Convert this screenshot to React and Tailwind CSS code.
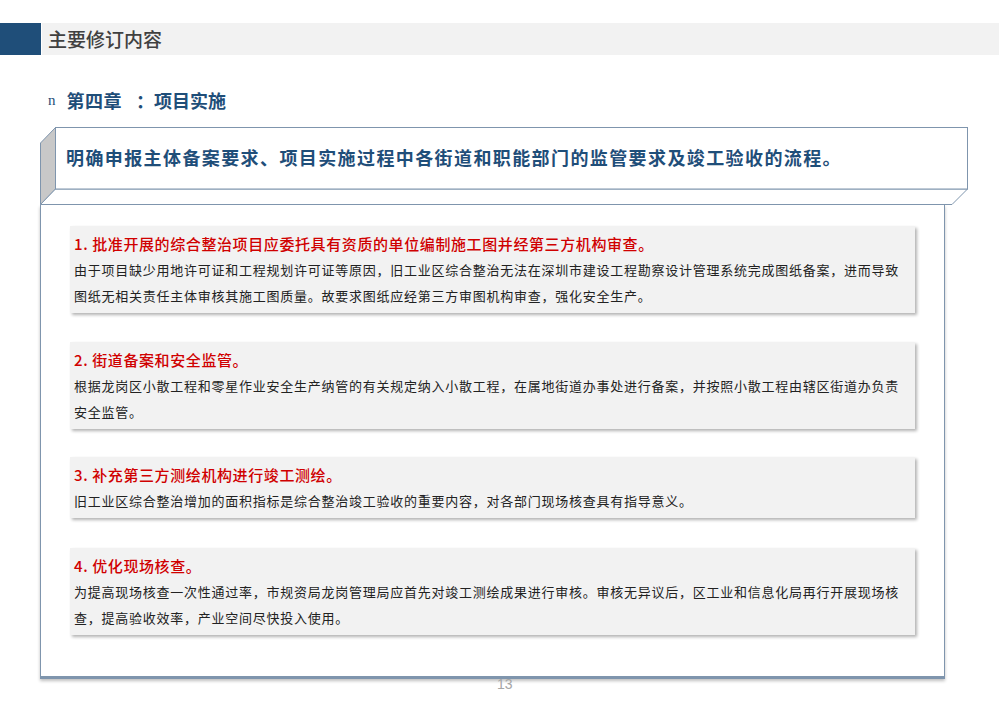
import React from 'react'

const font = { fontFamily: '"Noto Sans CJK SC", "Liberation Sans", sans-serif' }

const items = [
  {
    title: '1. 批准开展的综合整治项目应委托具有资质的单位编制施工图并经第三方机构审查。',
    body: '由于项目缺少用地许可证和工程规划许可证等原因，旧工业区综合整治无法在深圳市建设工程勘察设计管理系统完成图纸备案，进而导致图纸无相关责任主体审核其施工图质量。故要求图纸应经第三方审图机构审查，强化安全生产。',
    mt: 'mt-[20px]',
  },
  {
    title: '2. 街道备案和安全监管。',
    body: '根据龙岗区小散工程和零星作业安全生产纳管的有关规定纳入小散工程，在属地街道办事处进行备案，并按照小散工程由辖区街道办负责安全监管。',
    mt: 'mt-[29px]',
  },
  {
    title: '3. 补充第三方测绘机构进行竣工测绘。',
    body: '旧工业区综合整治增加的面积指标是综合整治竣工验收的重要内容，对各部门现场核查具有指导意义。',
    mt: 'mt-[28px]',
  },
  {
    title: '4. 优化现场核查。',
    body: '为提高现场核查一次性通过率，市规资局龙岗管理局应首先对竣工测绘成果进行审核。审核无异议后，区工业和信息化局再行开展现场核查，提高验收效率，产业空间尽快投入使用。',
    mt: 'mt-[30px]',
  },
]

export default function App() {
  return (
    <div className="w-[999px] h-[706px] bg-white overflow-hidden relative" style={font}>
      <div className="flex h-[32px] mt-[23px]">
        <div className="w-[41px] bg-[#1f4e79]" />
        <div className="flex-1 ml-[1px] bg-[#f2f2f2] flex items-center pl-[6px] text-[19px] text-[#404040] font-medium">
          主要修订内容
        </div>
      </div>

      <div className="flex items-center mt-[32px] ml-[48px] h-[26px]">
        <span className="text-[15px] text-[#1f4e79] mr-[11px]" style={{ fontFamily: '"Liberation Serif", serif' }}>n</span>
        <span className="text-[18px] font-bold text-[#1f4e79] tracking-[0.5px]">第四章</span>
        <span className="text-[18px] font-bold text-[#1f4e79] ml-[14px]">：项目实施</span>
      </div>

      <div className="relative ml-[40px] mt-[14px] w-[929px] h-[78px]">
        <svg className="absolute inset-0" width="929" height="78" viewBox="0 0 929 78">
          <polygon points="0.5,16 15.5,0.5 15.5,62 0.5,77.5" fill="#c8c8c8" stroke="#7f95ad" />
          <polygon points="0.5,77.5 15.5,62 927.5,62 912,77.5" fill="#fff" stroke="#7f95ad" />
          <rect x="15.5" y="0.5" width="912" height="61.5" fill="#fff" stroke="#7f95ad" />
        </svg>
        <div className="relative pl-[26px] pt-[17px] text-[18px] font-bold text-[#1f4e79] tracking-[1.4px]">
          明确申报主体备案要求、项目实施过程中各街道和职能部门的监管要求及竣工验收的流程。
        </div>
      </div>

      <div className="ml-[40px] w-[905px] h-[474px] border-x border-b-[3px] border-[#7f95ad] shadow-[0_2px_3px_rgba(0,0,0,0.25)] px-[29px] pt-[1px]">
        {items.map((it, i) => (
          <div key={i} className={`${it.mt} bg-[#f2f2f2] shadow-[2px_2px_3px_rgba(0,0,0,0.3)] px-[4px] pt-[5px] pb-[4px]`}>
            <div className="text-[15px] font-medium text-[#d00000] leading-[26px] tracking-[0.6px]">{it.title}</div>
            <div className="text-[13px] text-[#222] leading-[26px] tracking-[0.75px]">{it.body}</div>
          </div>
        ))}
      </div>

      <div className="absolute left-[497px] top-[674px] text-[14px] text-[#a6a6a6]" style={{ fontFamily: '"Liberation Sans", sans-serif' }}>13</div>
    </div>
  )
}
